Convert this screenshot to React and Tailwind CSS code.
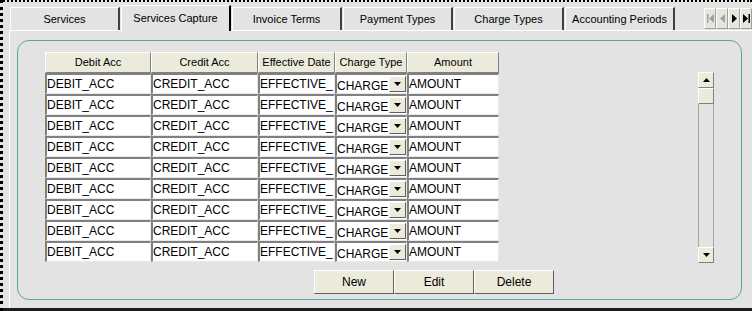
import React from 'react';

const tabs = ['Services', 'Services Capture', 'Invoice Terms', 'Payment Types', 'Charge Types', 'Accounting Periods'];
const cols = [
    { label: 'Debit Acc', w: 'w-[106px]', value: 'DEBIT_ACC' },
    { label: 'Credit Acc', w: 'w-[107px]', value: 'CREDIT_ACC' },
    { label: 'Effective Date', w: 'w-[77px]', value: 'EFFECTIVE_' },
    { label: 'Charge Type', w: 'w-[72px]', value: 'CHARGE', combo: true },
    { label: 'Amount', w: 'w-[92px]', value: 'AMOUNT' },
];
const rows = Array.from({ length: 9 });

const Tri = ({ up }) => (
    <svg width="7" height="4" viewBox="0 0 7 4">
        <polygon points={up ? '0,4 7,4 3.5,0' : '0,0 7,0 3.5,4'} fill="#000" />
    </svg>
);

const NavBtn = ({ kind, off }) => {
    const c = off ? '#a0a0a0' : '#000';
    return (
        <div className="w-[12px] h-[21px] bg-[#e6e6e0] border border-t-white border-l-white border-r-[#a0a0a0] border-b-[#a0a0a0] flex items-center justify-center">
            <svg width="7" height="9" viewBox="0 0 7 9">
                {kind === 'first' && <><rect x="0" y="0" width="1.5" height="9" fill={c} /><polygon points="7,0 7,9 2,4.5" fill={c} /></>}
                {kind === 'prev' && <polygon points="6,0 6,9 1,4.5" fill={c} />}
                {kind === 'next' && <polygon points="1,0 1,9 6,4.5" fill={c} />}
                {kind === 'last' && <><polygon points="0,0 0,9 5,4.5" fill={c} /><rect x="5.5" y="0" width="1.5" height="9" fill={c} /></>}
            </svg>
        </div>
    );
};

const App = () => {
    return (
        <div className="w-[752px] h-[311px] overflow-hidden bg-[#e3e3e3] border-l-[3px] border-t-2 border-dotted border-black flex flex-col font-['Liberation_Sans',Arial,sans-serif] text-black">
            {/* tab strip */}
            <div className="flex items-end h-[28px] pl-[7px] relative">
                {tabs.map((t, i) => {
                    const sel = i === 1;
                    return (
                        <div
                            key={t}
                            className={`w-[110px] ${sel ? 'h-[26px] -mb-[1px] border-r-2 border-r-black bg-[#e3e3e3] z-10' : 'h-[23px] border-r-2 border-r-[#404040]'} mr-[1px] border-t border-l border-t-white border-l-white rounded-tl-[2px] flex items-center justify-center text-[11px]`}
                        >
                            {t}
                        </div>
                    );
                })}
                <div className="ml-auto flex mb-[1px]">
                    <NavBtn kind="first" off />
                    <NavBtn kind="prev" off />
                    <NavBtn kind="next" />
                    <NavBtn kind="last" />
                </div>
            </div>

            {/* tab panel */}
            <div className="flex-1 border-t border-l border-t-white border-l-white ml-[6px] pt-[9px] pl-[7px] pr-[10px] pb-[8px]">
                <div className="h-full border border-[#5aa7a2] rounded-[12px] pl-[27px] pt-[11px] flex flex-col">
                    <div className="flex">
                        <div className="flex flex-col">
                            <div className="flex">
                                {cols.map((c) => (
                                    <div key={c.label} className={`${c.w} h-[21px] bg-[#ebeadb] border border-t-white border-l-white border-r-[#808080] border-b-[#808080] flex items-center justify-center text-[11px]`}>
                                        {c.label}
                                    </div>
                                ))}
                            </div>
                            {rows.map((_, r) => (
                                <div key={r} className="flex">
                                    {cols.map((c) => (
                                        <div key={c.label} className={`${c.w} h-[21px] bg-white border-t-2 border-l-2 border-t-[#808080] border-l-[#808080] border-b border-r border-b-[#e8e8e8] border-r-[#e8e8e8] flex items-center text-[12px] leading-none overflow-hidden whitespace-nowrap`}>
                                            {c.combo ? (
                                                <div className="flex items-center w-full justify-between">
                                                    <span className="pt-[3px]">{c.value}</span>
                                                    <div className="w-[17px] h-[16px] bg-[#ebeadb] border border-t-white border-l-white border-r-[#606060] border-b-[#606060] flex items-center justify-center">
                                                        <Tri />
                                                    </div>
                                                </div>
                                            ) : (
                                                <span>{c.value}</span>
                                            )}
                                        </div>
                                    ))}
                                </div>
                            ))}
                        </div>

                        {/* scrollbar */}
                        <div className="ml-[199px] mt-[20px] w-[16px] h-[191px] flex flex-col border-x border-[#a8a8a0] bg-[#e3e3e3]">
                            <div className="h-[16px] bg-[#ebeadb] border border-t-white border-l-white border-r-[#808080] border-b-[#808080] flex items-center justify-center -mx-[1px]">
                                <Tri up />
                            </div>
                            <div className="h-[16px] bg-[#ebeadb] border border-t-white border-l-white border-r-[#808080] border-b-[#808080] -mx-[1px]" />
                            <div className="flex-1" />
                            <div className="h-[16px] bg-[#ebeadb] border border-t-white border-l-white border-r-[#808080] border-b-[#808080] flex items-center justify-center -mx-[1px]">
                                <Tri />
                            </div>
                        </div>
                    </div>

                    {/* buttons */}
                    <div className="flex mt-[7px] ml-[269px]">
                        {['New', 'Edit', 'Delete'].map((b) => (
                            <div key={b} className="w-[80px] h-[24px] bg-[#ebeadb] border border-t-white border-l-white border-r-[#606060] border-b-[#606060] flex items-center justify-center text-[12px]">
                                {b}
                            </div>
                        ))}
                    </div>
                </div>
            </div>
            <div className="h-[3px] bg-[#1c1c1c] -ml-[3px]" />
        </div>
    );
};

export default App;
